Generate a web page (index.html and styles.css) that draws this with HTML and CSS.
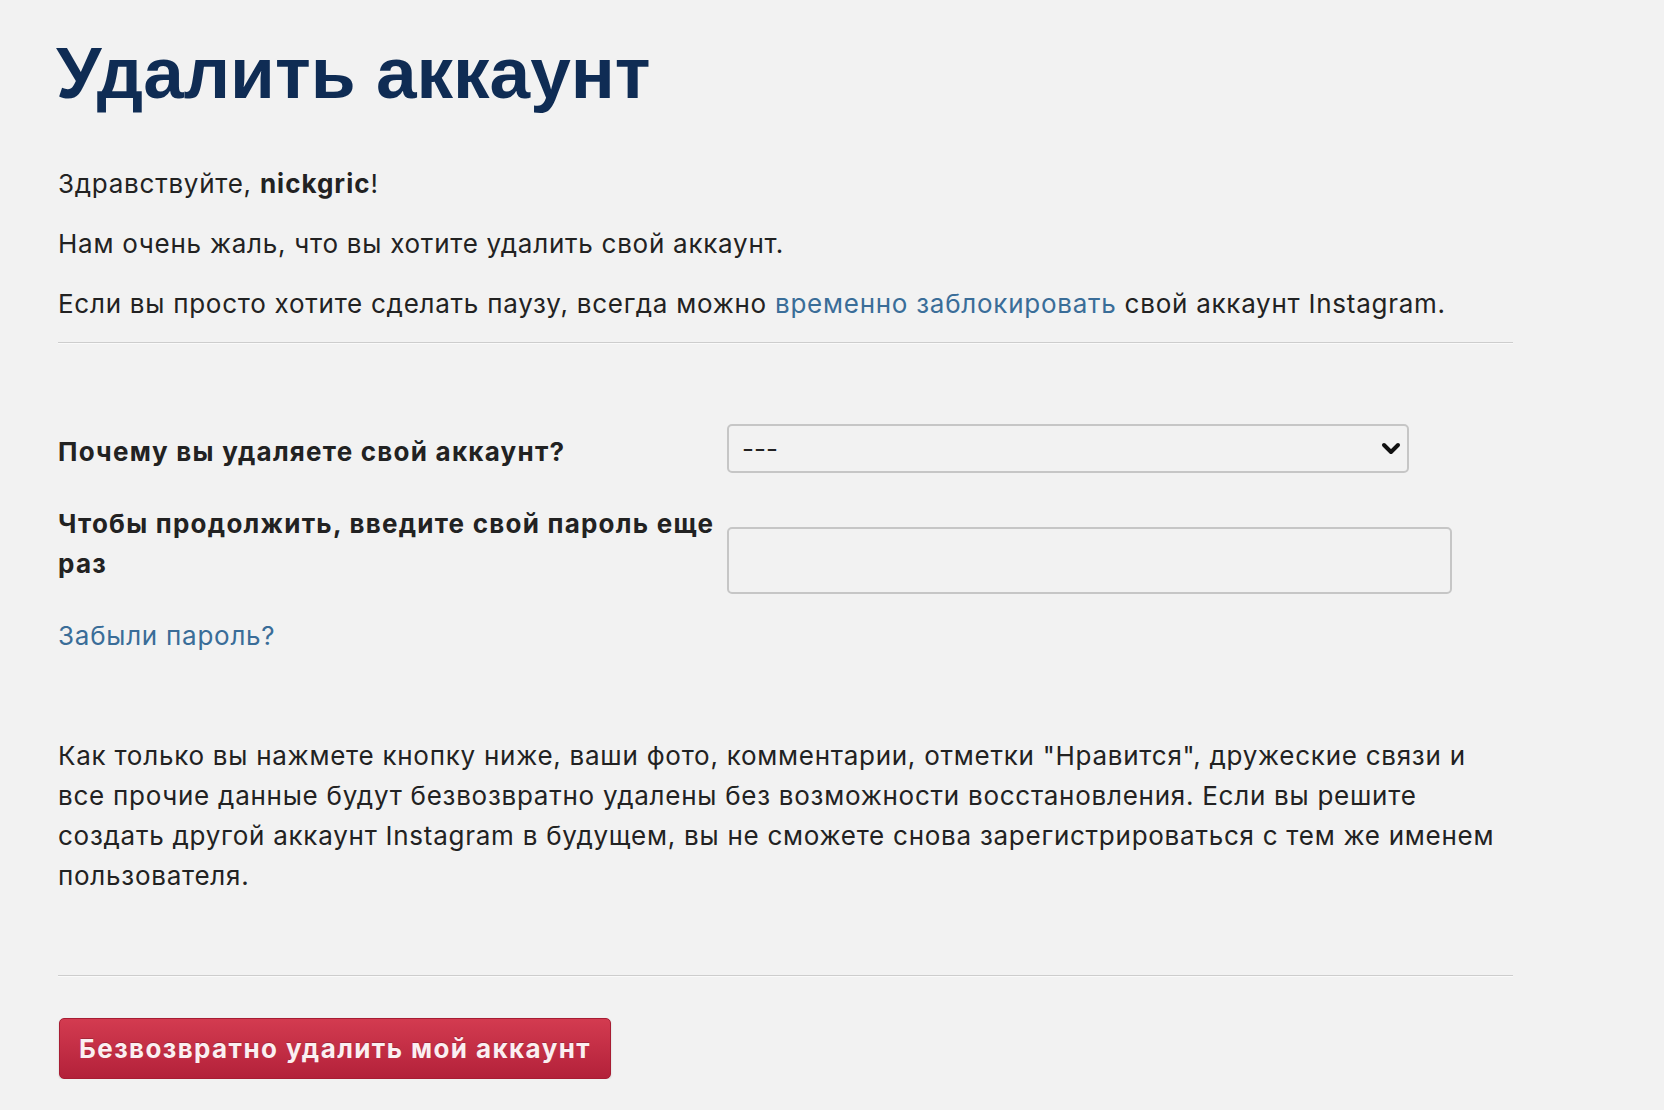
FILE: index.html
```html
<!DOCTYPE html>
<html lang="ru">
<head>
<meta charset="utf-8">
<title>Удалить аккаунт</title>
<link rel="stylesheet" href="styles.css">
</head>
<body>
<main class="page">
  <h1 class="title">Удалить аккаунт</h1>
  <p class="text">Здравствуйте, <strong>nickgric</strong>!</p>
  <p class="text">Нам очень жаль, что вы хотите удалить свой аккаунт.</p>
  <p class="text">Если вы просто хотите сделать паузу, всегда можно <a class="link" href="#">временно заблокировать</a> свой аккаунт Instagram.</p>
  <hr class="rule rule-top">
  <form class="form">
    <div class="row row-reason">
      <label class="label" for="reason">Почему вы удаляете свой аккаунт?</label>
      <div class="select-wrap">
        <select class="select" id="reason">
          <option>---</option>
        </select>
        <svg class="chevron" width="20" height="14" viewBox="0 0 20 14" aria-hidden="true"><path d="M3 3 L10 10 L17 3" fill="none" stroke="#111" stroke-width="4" stroke-linecap="round" stroke-linejoin="round"/></svg>
      </div>
    </div>
    <div class="row row-pass">
      <label class="label" for="pass">Чтобы продолжить, введите свой пароль еще раз</label>
      <input class="input" id="pass" type="password">
    </div>
    <a class="link forgot" href="#">Забыли пароль?</a>
    <p class="text warning">Как только вы нажмете кнопку ниже, ваши фото, комментарии, отметки "Нравится", дружеские связи и все прочие данные будут безвозвратно удалены без возможности восстановления. Если вы решите создать другой аккаунт Instagram в будущем, вы не сможете снова зарегистрироваться с тем же именем пользователя.</p>
    <hr class="rule rule-bottom">
    <button class="danger" type="button">Безвозвратно удалить мой аккаунт</button>
  </form>
</main>
</body>
</html>
```
FILE: styles.css
```css
html, body {
  margin: 0;
  padding: 0;
  background: #f2f2f2;
}
body {
  font-family: Inter, "Noto Sans", sans-serif;
  color: #222;
  font-size: 26px;
  line-height: 40px;
  letter-spacing: 0.74px;
}
.page {
  width: 1455px;
  padding: 35px 0 0 58px;
}
.title {
  margin: 0 0 54px -2px;
  font-family: "Liberation Sans", Arial, sans-serif;
  font-weight: 700;
  font-size: 73px;
  line-height: 75px;
  letter-spacing: 0;
  color: #0f2c54;
}
.text {
  margin: 0 0 20px;
}
.text strong {
  font-weight: 700;
  letter-spacing: 1px;
}
.link {
  color: #3a6d98;
  text-decoration: none;
}
.rule {
  margin: 0;
  height: 0;
  border: 0;
  border-top: 1px solid #cdcdcd;
  border-bottom: 1px solid #fafafa;
}
.rule-top {
  margin-top: -2px;
}
.form {
  display: flex;
  flex-direction: column;
  align-items: flex-start;
  padding-top: 80px;
}
.row {
  display: grid;
  grid-template-columns: 669px 1fr;
  align-items: start;
  width: 100%;
}
.label {
  font-weight: 700;
  letter-spacing: 1.24px;
}
.row-reason .label {
  padding-top: 8px;
}
.row-pass {
  margin-top: 31px;
}
.select-wrap {
  position: relative;
  width: 682px;
}
.select {
  appearance: none;
  -webkit-appearance: none;
  display: block;
  width: 682px;
  height: 49px;
  margin: 0;
  padding: 0 40px 0 13px;
  border: 2px solid #c6c6c6;
  border-radius: 5px;
  background: #f2f2f2;
  font-family: Inter, sans-serif;
  font-size: 26px;
  color: #222;
}
.chevron {
  position: absolute;
  right: 8px;
  top: 18px;
  pointer-events: none;
}
.input {
  display: block;
  box-sizing: border-box;
  width: 725px;
  height: 67px;
  margin: 23px 0 0;
  border: 2px solid #c6c6c6;
  border-radius: 5px;
  background: #f2f2f2;
  font-size: 26px;
}
.forgot {
  margin-top: 22px;
}
.warning {
  margin: 80px 0 0;
  width: 1455px;
}
.rule-bottom {
  width: 1455px;
  margin-top: 79px;
}
.danger {
  margin-top: 41px;
  margin-left: 1px;
  width: 552px;
  height: 61px;
  padding: 0;
  border: 1px solid #a71d33;
  border-radius: 5px;
  background: linear-gradient(#d33b50, #b3213a);
  box-shadow: 0 1px 2px rgba(0,0,0,0.15);
  color: #fbeff1;
  font-family: Inter, sans-serif;
  font-weight: 700;
  font-size: 26px;
  letter-spacing: 1.4px;
  text-shadow: 0 -1px 0 rgba(0,0,0,0.2);
  cursor: pointer;
}
```
